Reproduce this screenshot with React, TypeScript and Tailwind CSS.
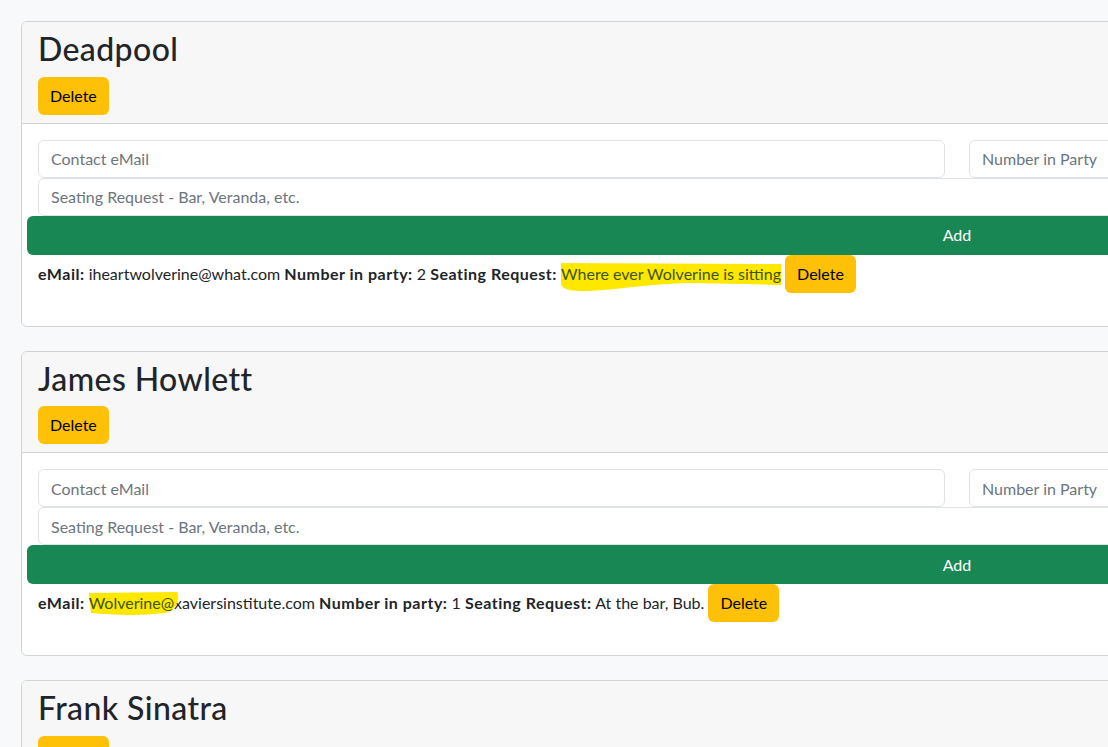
import React from 'react';

interface Reservation {
  email: React.ReactNode;
  party: number;
  seating: React.ReactNode;
}

interface Guest {
  name: string;
  reservations: Reservation[];
}

// hand-drawn marker stroke laid over a run of text
const Marker: React.FC<{ children: React.ReactNode; width: number; variant: 'long' | 'short' }> = ({
  children,
  width,
  variant,
}) => (
  <span className="relative inline-block leading-6">
    <svg
      className="absolute left-[-2px] top-[-2px] pointer-events-none"
      width={width + 6}
      height={34}
      viewBox={`0 0 ${width + 6} 34`}
    >
      {variant === 'long' ? (
        <path
          d={`M2 3 L${width + 4} 4 L${width + 4} 25 L${width * 0.62} 23 C${width * 0.45} 23 ${width * 0.3} 29 ${width * 0.14} 31 C${width * 0.04} 32 3 28 2 24 Z`}
          fill="#ffe800"
        />
      ) : (
        <path
          d={`M2 4 L${width + 2} 3 C${width + 6} 10 ${width} 22 ${width - 10} 24 C${width * 0.6} 27 ${width * 0.3} 26 4 24 Z`}
          fill="#ffe800"
        />
      )}
    </svg>
    <span className="relative text-[#3d5516]">{children}</span>
  </span>
);

const guests: Guest[] = [
  {
    name: 'Deadpool',
    reservations: [
      {
        email: 'iheartwolverine@what.com',
        party: 2,
        seating: (
          <Marker width={218} variant="long">
            Where ever Wolverine is sitting
          </Marker>
        ),
      },
    ],
  },
  {
    name: 'James Howlett',
    reservations: [
      {
        email: (
          <>
            <Marker width={88} variant="short">
              Wolverine@
            </Marker>
            xaviersinstitute.com
          </>
        ),
        party: 1,
        seating: 'At the bar, Bub.',
      },
    ],
  },
  { name: 'Frank Sinatra', reservations: [] },
];

const DeleteButton: React.FC = () => (
  <button className="h-[38px] px-3 rounded-md bg-[#ffc107] text-black text-base leading-6">Delete</button>
);

const GuestCard: React.FC<{ guest: Guest }> = ({ guest }) => (
  <div className="border border-[#d2d2d2] rounded-md bg-white overflow-hidden">
    <div className="bg-[#f7f7f7] border-b border-[#d2d2d2] px-4 py-2">
      <h2 className="text-[32px] leading-[38.5px] font-medium tracking-[0.4px] text-[#212529] mb-2">{guest.name}</h2>
      <DeleteButton />
    </div>
    <div className="p-4">
      <div className="flex gap-6">
        <input
          className="w-[907px] h-[38px] border border-[#dee2e6] rounded-md px-3 text-base placeholder:text-[#6c757d] bg-white"
          placeholder="Contact eMail"
        />
        <input
          className="w-[400px] h-[38px] border border-[#dee2e6] rounded-md px-3 text-base placeholder:text-[#6c757d] bg-white"
          placeholder="Number in Party"
        />
      </div>
      <input
        className="w-full h-[38px] border border-[#dee2e6] rounded-md px-3 text-base placeholder:text-[#6c757d] bg-white block"
        placeholder="Seating Request - Bar, Veranda, etc."
      />
      <button className="-ml-[11px] w-[1860px] h-[39px] rounded-md bg-[#198754] text-white text-base block">
        Add
      </button>
      <div className="mb-[17px] min-h-[38px] text-base text-[#212529]">
        {guest.reservations.map((r, i) => (
          <div key={i} className="leading-[38px]">
            <b className="font-bold tracking-[0.5px]">eMail:</b> {r.email}{' '}
            <b className="font-bold tracking-[0.5px]">Number in party:</b> {r.party}{' '}
            <b className="font-bold tracking-[0.5px]">Seating Request:</b> {r.seating} <DeleteButton />
          </div>
        ))}
      </div>
    </div>
  </div>
);

export default function App() {
  return (
    <div
      className="w-full h-screen overflow-hidden bg-[#f8f9fa]"
      style={{ fontFamily: '"Segoe UI", Lato, "Noto Sans", sans-serif' }}
    >
      <div className="w-[1960px] pl-[21px] pt-[21px] flex flex-col gap-6">
        {guests.map((g) => (
          <GuestCard key={g.name} guest={g} />
        ))}
      </div>
    </div>
  );
}
